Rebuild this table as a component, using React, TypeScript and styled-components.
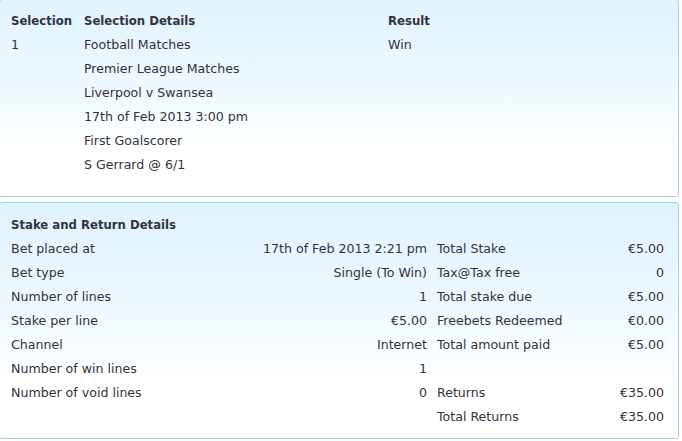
import styled, { createGlobalStyle } from 'styled-components';

const GlobalStyle = createGlobalStyle`
  html, body {
    margin: 0;
    padding: 0;
    background: #ffffff;
    overflow: hidden;
  }
  body {
    font-family: "DejaVu Sans", Verdana, sans-serif;
    font-size: 12.6px;
    color: #333340;
  }
`;

const Page = styled.div`
  width: 682px;
  height: 441px;
  overflow: hidden;
  display: flex;
  flex-direction: column;
  gap: 5px;
`;

const Panel = styled.div<{ $height: number; $top: number; $bottom: number }>`
  box-sizing: border-box;
  width: 680px;
  height: ${(p) => p.$height}px;
  margin-left: -1px;
  padding: ${(p) => p.$top}px 14px ${(p) => p.$bottom}px 11px;
  border: 1px solid #a9d0e1;
  border-radius: 3px;
  background: linear-gradient(to bottom, #dff3fd 0%, #eef9fe 45%, #ffffff 75%);
  flex-shrink: 0;
  &:first-child {
    margin-top: -1px;
  }
`;

const SelectionGrid = styled.div`
  display: grid;
  grid-template-columns: 73px 304px 1fr;
  grid-auto-rows: 24px;
  align-items: center;
`;

const StakeGrid = styled.div`
  display: grid;
  grid-template-columns: 200px 216px 10px 1fr auto;
  grid-auto-rows: 24px;
  align-items: center;
`;

const Head = styled.div<{ $span?: number }>`
  font-weight: bold;
  font-size: 11.7px;
  white-space: nowrap;
  grid-column: ${(p) => (p.$span ? `span ${p.$span}` : 'auto')};
`;

const Cell = styled.div<{ $right?: boolean }>`
  white-space: nowrap;
  margin-top: -1px;
  text-align: ${(p) => (p.$right ? 'right' : 'left')};
`;

const Stack = styled.div`
  display: contents;
`;

const details = [
  'Football Matches',
  'Premier League Matches',
  'Liverpool v Swansea',
  '17th of Feb 2013 3:00 pm',
  'First Goalscorer',
  'S Gerrard @ 6/1',
];

const stakeRows: [string, string, string, string][] = [
  ['Bet placed at', '17th of Feb 2013 2:21 pm', 'Total Stake', '€5.00'],
  ['Bet type', 'Single (To Win)', 'Tax@Tax free', '0'],
  ['Number of lines', '1', 'Total stake due', '€5.00'],
  ['Stake per line', '€5.00', 'Freebets Redeemed', '€0.00'],
  ['Channel', 'Internet', 'Total amount paid', '€5.00'],
  ['Number of win lines', '1', '', ''],
  ['Number of void lines', '0', 'Returns', '€35.00'],
  ['', '', 'Total Returns', '€35.00'],
];

export default function App() {
  return (
    <>
      <GlobalStyle />
      <Page>
        <Panel $height={198} $top={9} $bottom={20}>
          <SelectionGrid>
            <Head>Selection</Head>
            <Head>Selection Details</Head>
            <Head>Result</Head>
            {details.map((d, i) => (
              <Stack key={d}>
                <Cell>{i === 0 ? '1' : ''}</Cell>
                <Cell>{d}</Cell>
                <Cell>{i === 0 ? 'Win' : ''}</Cell>
              </Stack>
            ))}
          </SelectionGrid>
        </Panel>
        <Panel $height={237} $top={10} $bottom={9}>
          <StakeGrid>
            <Head $span={5}>Stake and Return Details</Head>
            {stakeRows.map((r, i) => (
              <Stack key={i}>
                <Cell>{r[0]}</Cell>
                <Cell $right>{r[1]}</Cell>
                <span />
                <Cell>{r[2]}</Cell>
                <Cell $right>{r[3]}</Cell>
              </Stack>
            ))}
          </StakeGrid>
        </Panel>
      </Page>
    </>
  );
}
